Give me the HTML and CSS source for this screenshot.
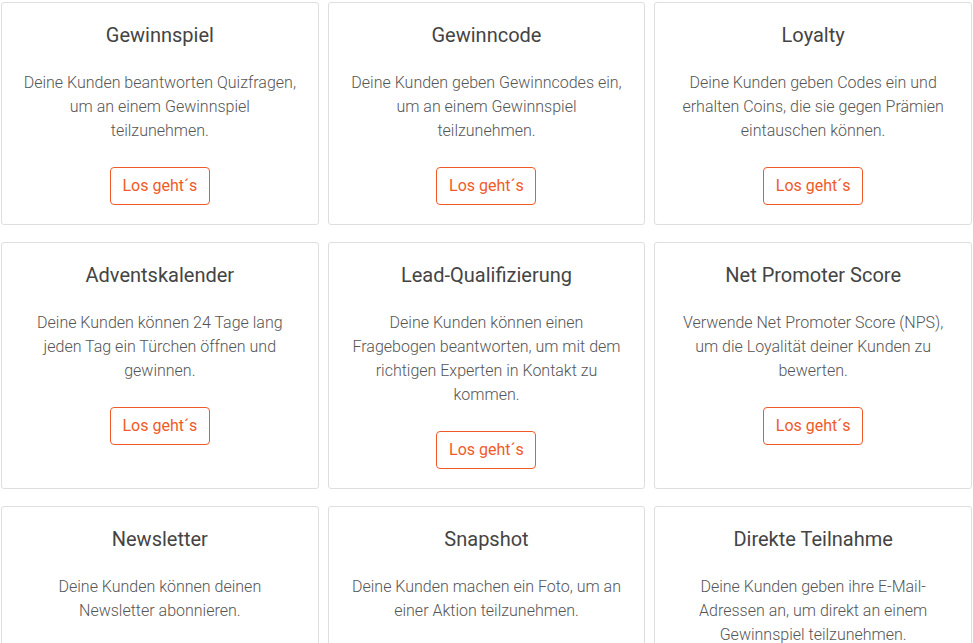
FILE: index.html
```html
<!DOCTYPE html>
<html lang="de">
<head>
<meta charset="utf-8">
<link rel="stylesheet" href="styles.css">
</head>
<body>
<div class="grid">
  <div class="card">
    <h3 class="title">Gewinnspiel</h3>
    <p class="desc">Deine Kunden beantworten Quizfragen, um an einem Gewinnspiel teilzunehmen.</p>
    <a class="btn">Los geht´s</a>
  </div>
  <div class="card">
    <h3 class="title">Gewinncode</h3>
    <p class="desc">Deine Kunden geben Gewinncodes ein, um an einem Gewinnspiel teilzunehmen.</p>
    <a class="btn">Los geht´s</a>
  </div>
  <div class="card">
    <h3 class="title">Loyalty</h3>
    <p class="desc">Deine Kunden geben Codes ein und erhalten Coins, die sie gegen Prämien eintauschen können.</p>
    <a class="btn">Los geht´s</a>
  </div>
  <div class="card">
    <h3 class="title">Adventskalender</h3>
    <p class="desc">Deine Kunden können 24 Tage lang jeden Tag ein Türchen öffnen und gewinnen.</p>
    <a class="btn">Los geht´s</a>
  </div>
  <div class="card">
    <h3 class="title">Lead-Qualifizierung</h3>
    <p class="desc">Deine Kunden können einen Fragebogen beantworten, um mit dem richtigen Experten in Kontakt zu kommen.</p>
    <a class="btn">Los geht´s</a>
  </div>
  <div class="card">
    <h3 class="title">Net Promoter Score</h3>
    <p class="desc">Verwende Net Promoter Score (NPS), um die Loyalität deiner Kunden zu bewerten.</p>
    <a class="btn">Los geht´s</a>
  </div>
  <div class="card">
    <h3 class="title">Newsletter</h3>
    <p class="desc">Deine Kunden können deinen Newsletter abonnieren.</p>
    <a class="btn">Los geht´s</a>
  </div>
  <div class="card">
    <h3 class="title">Snapshot</h3>
    <p class="desc">Deine Kunden machen ein Foto, um an einer Aktion teilzunehmen.</p>
    <a class="btn">Los geht´s</a>
  </div>
  <div class="card">
    <h3 class="title">Direkte Teilnahme</h3>
    <p class="desc">Deine Kunden geben ihre E-Mail-Adressen an, um direkt an einem Gewinnspiel teilzunehmen.</p>
    <a class="btn">Los geht´s</a>
  </div>
</div>
</body>
</html>
```
FILE: styles.css
```css
html, body {
  margin: 0;
  padding: 0;
  background: #fff;
  font-family: Roboto, "Liberation Sans", sans-serif;
}
.grid {
  display: grid;
  grid-template-columns: repeat(3, 1fr);
  column-gap: 9px;
  row-gap: 17px;
  padding: 2px 1px 0 1px;
}
.card {
  border: 1px solid #dedede;
  border-radius: 3px;
  padding: 20px 20px 19px;
  display: flex;
  flex-direction: column;
  align-items: center;
  text-align: center;
}
.title {
  margin: 0;
  font-size: 20px;
  line-height: 24px;
  font-weight: 400;
  color: #444;
}
.desc {
  margin: 24px 0 0;
  font-size: 16px;
  line-height: 24px;
  font-weight: 300;
  color: #555;
}
.btn {
  margin-top: 24px;
  box-sizing: border-box;
  width: 100px;
  height: 38px;
  line-height: 36px;
  border: 1px solid #f05a28;
  border-radius: 4px;
  color: #f05a28;
  font-size: 16px;
  font-weight: 400;
}
```
